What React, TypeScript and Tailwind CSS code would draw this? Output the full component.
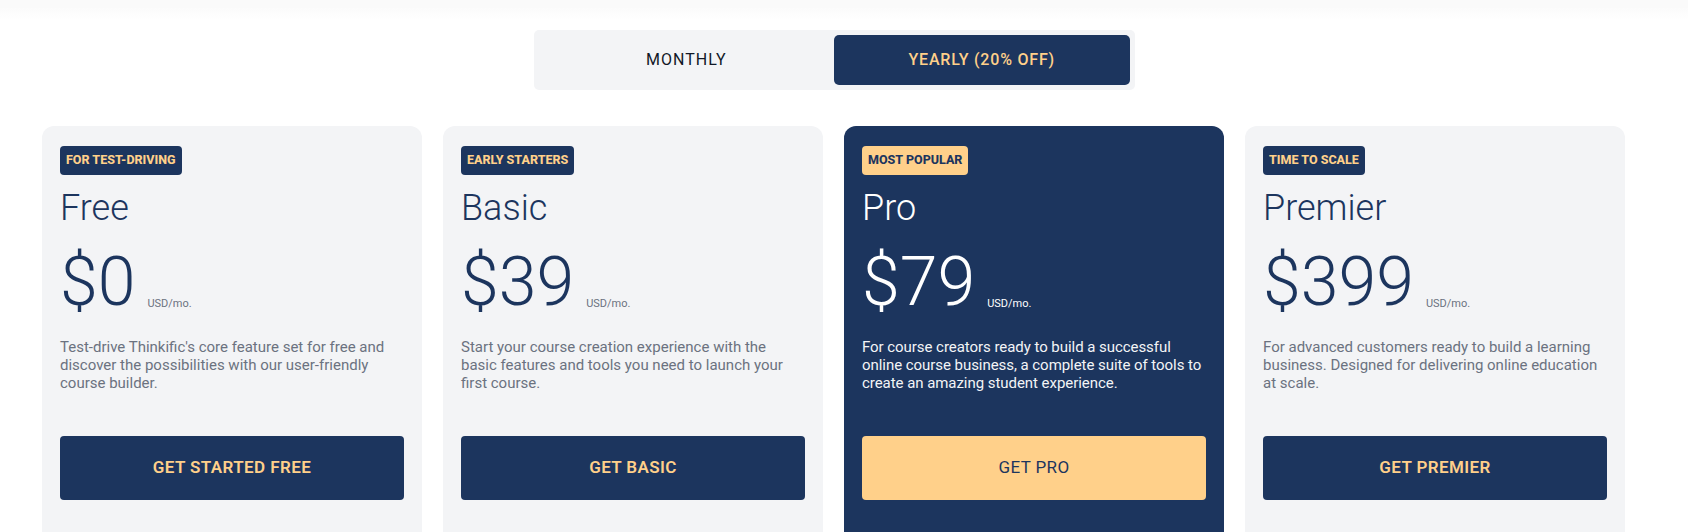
import React from "react";

type Plan = {
  badge: string;
  name: string;
  price: string;
  desc: string;
  cta: string;
  featured?: boolean;
};

const plans: Plan[] = [
  {
    badge: "FOR TEST-DRIVING",
    name: "Free",
    price: "$0",
    desc: "Test-drive Thinkific's core feature set for free and discover the possibilities with our user-friendly course builder.",
    cta: "GET STARTED FREE",
  },
  {
    badge: "EARLY STARTERS",
    name: "Basic",
    price: "$39",
    desc: "Start your course creation experience with the basic features and tools you need to launch your first course.",
    cta: "GET BASIC",
  },
  {
    badge: "MOST POPULAR",
    name: "Pro",
    price: "$79",
    desc: "For course creators ready to build a successful online course business, a complete suite of tools to create an amazing student experience.",
    cta: "GET PRO",
    featured: true,
  },
  {
    badge: "TIME TO SCALE",
    name: "Premier",
    price: "$399",
    desc: "For advanced customers ready to build a learning business. Designed for delivering online education at scale.",
    cta: "GET PREMIER",
  },
];

function Card({ p }: { p: Plan }) {
  const f = p.featured;
  return (
    <div
      className={
        f
          ? "w-[380px] shrink-0 rounded-[12px] bg-[#1c355e] px-[18px] pt-[20px] pb-[60px]"
          : "w-[380px] shrink-0 rounded-[12px] bg-[#f3f4f6] px-[18px] pt-[20px] pb-[60px]"
      }
    >
      <div className="flex">
        <span
          className={
            f
              ? "h-[29px] flex items-center rounded-[4px] bg-[#ffd08a] px-[6px] text-[12.5px] font-extrabold text-[#1c355e]"
              : "h-[29px] flex items-center rounded-[4px] bg-[#1c355e] px-[6px] text-[12.5px] font-extrabold text-[#ffd08a]"
          }
        >
          {p.badge}
        </span>
      </div>
      <div
        className={
          f
            ? "mt-[12px] h-[43px] text-[36px] leading-[43px] font-light text-white"
            : "mt-[12px] h-[43px] text-[36px] leading-[43px] font-light text-[#1c355e]"
        }
      >
        {p.name}
      </div>
      <div className="mt-[18px] flex items-baseline">
        <span
          className={
            f
              ? "text-[68px] leading-[68px] font-light text-white"
              : "text-[68px] leading-[68px] font-light text-[#1c355e]"
          }
        >
          {p.price}
        </span>
        <span
          className={
            f
              ? "ml-[12px] translate-y-[2px] text-[11px] text-white"
              : "ml-[12px] translate-y-[2px] text-[11px] text-[#6b7280]"
          }
        >
          USD/mo.
        </span>
      </div>
      <p
        className={
          f
            ? "mt-[22px] h-[54px] text-[15px] leading-[18px] tracking-[-0.05px] text-[#f3f4f6]"
            : "mt-[22px] h-[54px] text-[15px] leading-[18px] text-[#6b7280]"
        }
      >
        {p.desc}
      </p>
      <button
        className={
          f
            ? "mt-[44px] flex h-[64px] w-full items-center justify-center rounded-[4px] bg-[#ffd08a] text-[17px] font-normal tracking-[0.4px] text-[#1c355e]"
            : "mt-[44px] flex h-[64px] w-full items-center justify-center rounded-[4px] bg-[#1c355e] text-[17px] font-semibold tracking-[0.4px] text-[#ffd08a]"
        }
      >
        {p.cta}
      </button>
    </div>
  );
}

export default function App() {
  return (
    <div
      className="min-h-[532px] overflow-hidden bg-white"
      style={{ fontFamily: "Roboto, 'Noto Sans', Arial, sans-serif" }}
    >
      <div className="h-[8px] bg-[#fafafa]" />
      <div className="h-[12px] bg-gradient-to-b from-[#fbfbfb] to-white" />
      <div className="mt-[10px] flex w-[1668px] justify-center">
        <div className="flex h-[60px] w-[601px] rounded-[5px] bg-[#f3f4f6] p-[5px]">
          <button className="flex flex-1 items-center justify-center text-[16px] font-normal tracking-[1px] text-[#111827]">
            MONTHLY
          </button>
          <button className="flex flex-1 items-center justify-center rounded-[5px] bg-[#1c355e] text-[16px] font-medium tracking-[0.8px] text-[#ffd08a]">
            YEARLY (20% OFF)
          </button>
        </div>
      </div>
      <div className="mt-[36px] flex gap-[21px] pl-[42px]">
        {plans.map((p) => (
          <Card key={p.name} p={p} />
        ))}
      </div>
    </div>
  );
}
